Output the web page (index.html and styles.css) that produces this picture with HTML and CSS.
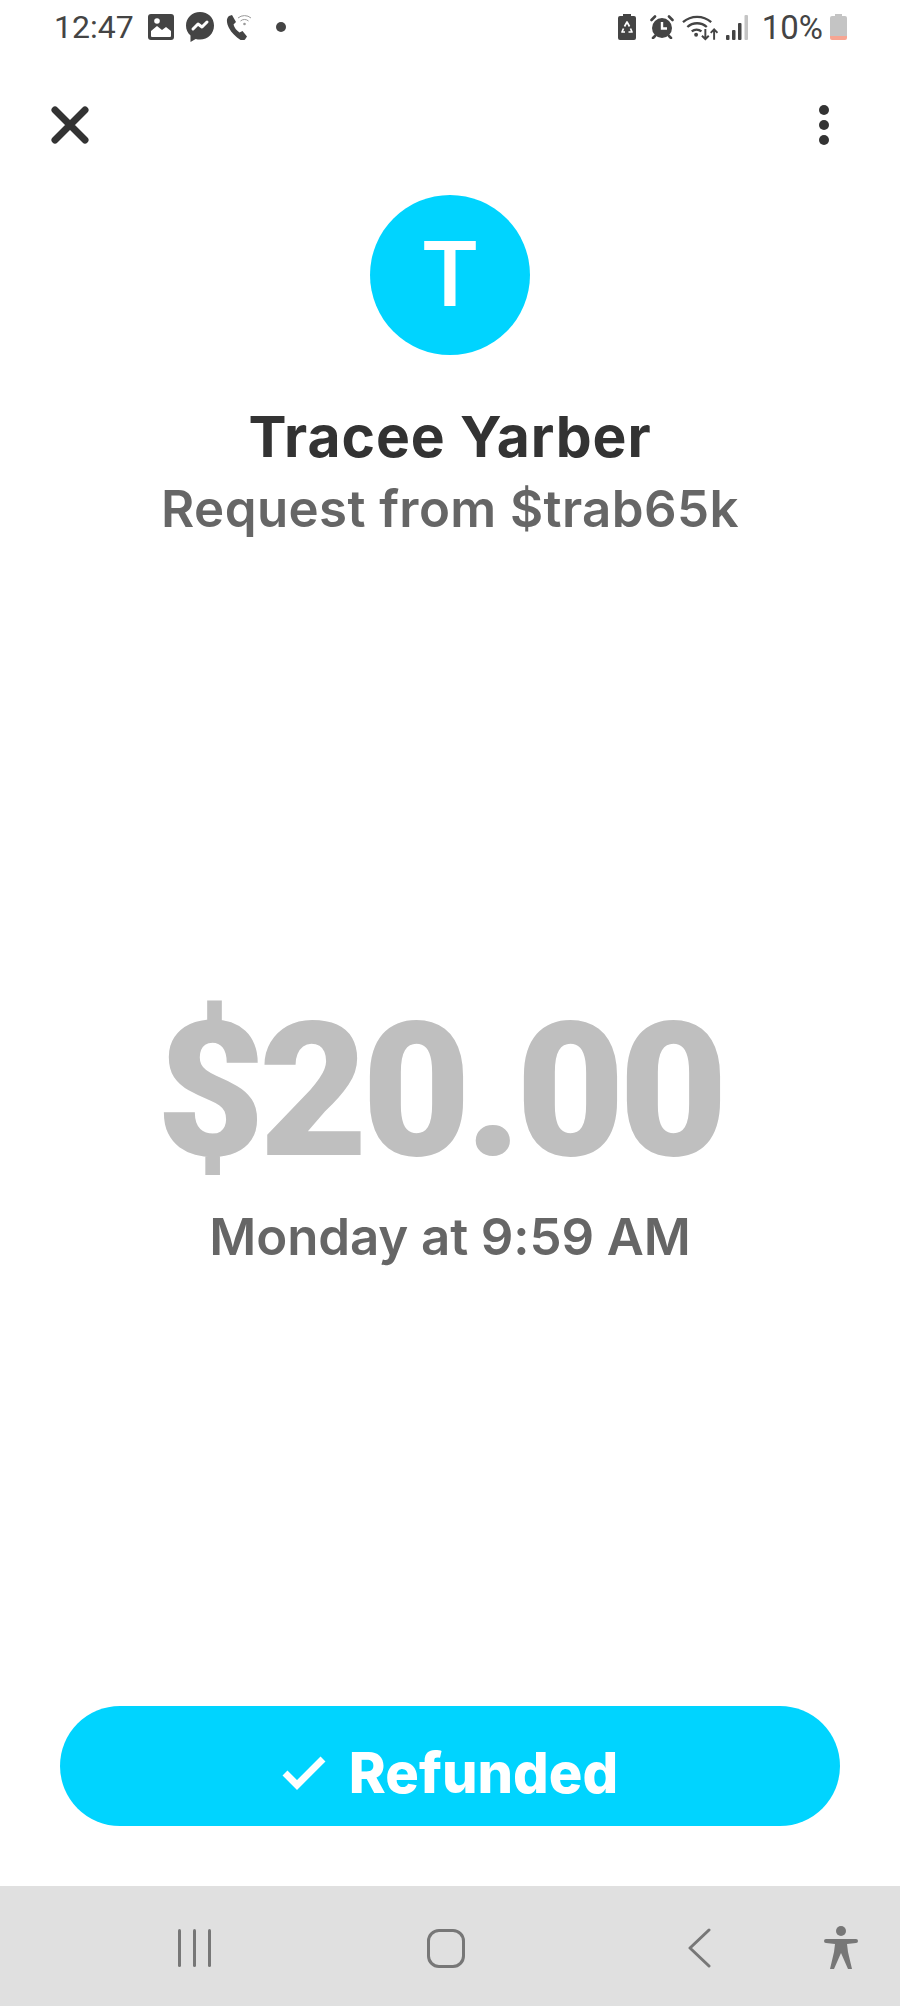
FILE: index.html
```html
<!DOCTYPE html>
<html lang="en">
  <head>
    <meta charset="UTF-8" />
    <meta name="viewport" content="width=device-width, initial-scale=1.0" />
    <title>Tracee Yarber</title>
    <link rel="stylesheet" href="styles.css">
  </head>
  <body>
    <div class="status">
      <span class="clock">12:47</span>
      <div class="status-left">
        <svg width="26" height="26" viewBox="0 0 26 26"><rect width="26" height="26" rx="3" fill="#444"/><path fill="#fff" d="M3 22v-5l6-5 5 4 4-3 5 4v5a1 1 0 0 1-1 1H4a1 1 0 0 1-1-1z"/><circle cx="9" cy="7" r="2.800" fill="#fff"/></svg>
        <svg width="28" height="30" viewBox="0 0 28 30"><path fill="#444" d="M14 0C6 0 0 6 0 13.500c0 4 1.600 7.500 4.500 10V30l5.200-3c1.400.4 2.800.6 4.300.6 8 0 14-6 14-14S22 0 14 0z"/><path fill="none" stroke="#fff" stroke-width="3" stroke-linejoin="round" stroke-linecap="round" d="M7 17l5-5 4 3 5-5"/></svg>
        <svg width="25" height="25" viewBox="0 0 25 25"><path fill="#444" d="M3 1l3-1 4 7-2.500 2.500c.8 3 3 6 6 8l3-1.500 4.500 5.500-2 3c-1 1-2.500 1.300-4 .8C10 22 5.500 18 3 13 1 9-.5 4 3 1z"/><g fill="none" stroke="#999" stroke-width="1"><path d="M12 3a10 10 0 0 1 13 0"/><path d="M14.500 6a6 6 0 0 1 8 0"/></g><circle cx="18.500" cy="9" r="1.300" fill="#999"/></svg>
        <span class="dot"></span>
      </div>
      <div class="status-right">
        <svg class="recycle" width="18" height="26" viewBox="0 0 18 26"><path fill="#444" d="M5 0h8v2h3a2 2 0 0 1 2 2v20a2 2 0 0 1-2 2H2a2 2 0 0 1-2-2V4a2 2 0 0 1 2-2h3z"/><path fill="none" stroke="#fff" stroke-width="1.700" stroke-linejoin="round" d="M6.500 12.500L9 8l2.500 4.500M12.500 14.500l1.500 3.500h-3.500M7 18H4l1.500-3.500"/></svg>
        <svg width="24" height="24" viewBox="0 0 24 24"><circle cx="12" cy="13" r="10" fill="#444"/><path fill="none" stroke="#444" stroke-width="2.600" stroke-linecap="round" d="M1.500 5L5 1.500M22.500 5L19 1.500M5 21l-2 2M19 21l2 2"/><path fill="none" stroke="#fff" stroke-width="2.400" d="M12 7v6.500h5"/></svg>
        <svg width="36" height="28" viewBox="0 0 37 28"><g fill="none" stroke="#444" stroke-width="2.400"><path d="M1 9a22 22 0 0 1 29 0"/><path d="M5.500 14a15 15 0 0 1 20 0"/><path d="M10 18.500a8 8 0 0 1 10 0"/></g><circle cx="14.500" cy="22" r="2" fill="#444"/><path fill="none" stroke="#444" stroke-width="2" d="M24 16v10M20.500 23l3.500 3.500 3.500-3.500M33 27V17M29.500 20l3.500-3.500 3.500 3.500"/></svg>
        <svg width="23" height="25" viewBox="0 0 23 25"><rect x="0" y="20" width="3.500" height="5" rx="1" fill="#444"/><rect x="6" y="15" width="3.500" height="10" rx="1" fill="#444"/><rect x="12" y="8" width="3.500" height="17" rx="1" fill="#444"/><rect x="18.500" y="0" width="3.500" height="25" rx="1" fill="#c4c4c4"/></svg>
        <span class="batt-num">10%</span>
        <svg class="batt" width="17" height="26" viewBox="0 0 17 26"><path fill="#c4c4c4" d="M5 0h7v2h3a2 2 0 0 1 2 2v18H0V4a2 2 0 0 1 2-2h3z"/><path fill="#f7a592" d="M0 22h17v2a2 2 0 0 1-2 2H2a2 2 0 0 1-2-2z"/></svg>
      </div>
    </div>

    <div class="toolbar">
      <svg class="close" width="40" height="40" viewBox="0 0 40 40"><path fill="none" stroke="#333" stroke-width="7" stroke-linecap="round" d="M5 5l30 30M35 5L5 35"/></svg>
      <div class="more"><span></span><span></span><span></span></div>
    </div>

    <div class="profile">
      <div class="avatar">T</div>
      <h1 class="name">Tracee Yarber</h1>
      <p class="sub">Request from $trab65k</p>
    </div>

    <div class="amount-box">
      <div class="amount">$20.00</div>
      <p class="date">Monday at 9:59 AM</p>
    </div>

    <div class="btn">
      <svg width="44" height="34" viewBox="0 0 44 34"><path fill="none" stroke="#fff" stroke-width="7" d="M3 17l12 12L41 3"/></svg>
      <span>Refunded</span>
    </div>

    <div class="nav">
      <div class="nav-recents"><span></span><span></span><span></span></div>
      <div class="nav-home"></div>
      <svg class="nav-back" width="24" height="40" viewBox="0 0 24 40"><path fill="none" stroke="#777" stroke-width="3" stroke-linecap="round" stroke-linejoin="round" d="M22 2L3 20l19 18"/></svg>
      <svg class="nav-access" width="34" height="44" viewBox="0 0 34 44"><circle cx="17" cy="5" r="5" fill="#777"/><path fill="#777" d="M2 13h30a2 2 0 0 1 0 4l-9 1 1 8 4 17h-4l-7-16-7 16H6l4-17 1-8-9-1a2 2 0 0 1 0-4z"/></svg>
    </div>
  </body>
</html>
```

FILE: styles.css
```css
* {
  box-sizing: border-box;
}
html,
body {
  margin: 0;
  padding: 0;
}
body {
  width: 900px;
  height: 2006px;
  background-color: white;
  font-family: "Inter", sans-serif;
  display: flex;
  flex-direction: column;
  overflow: hidden;
}

/* status bar */
.status {
  height: 54px;
  padding: 0 53px 0 54px;
  display: flex;
  align-items: center;
  color: #444;
  font-family: "Roboto", sans-serif;
}
.clock {
  font-size: 32px;
}
.status-left {
  display: flex;
  align-items: center;
  gap: 12px;
  margin-left: 14px;
}
.dot {
  width: 10px;
  height: 10px;
  border-radius: 50%;
  background-color: #444;
  margin-left: 13px;
}
.status-right {
  margin-left: auto;
  display: flex;
  align-items: center;
  gap: 8px;
}
.recycle {
  margin-right: 6px;
}
.batt-num {
  font-size: 33px;
  margin-left: 5px;
}
.batt {
  margin-left: -1px;
}

/* top actions */
.toolbar {
  margin-top: 51px;
  padding: 0 71px 0 50px;
  display: flex;
  justify-content: space-between;
  align-items: flex-start;
}
.more {
  display: flex;
  flex-direction: column;
  gap: 5px;
}
.more span {
  width: 10px;
  height: 10px;
  border-radius: 50%;
  background-color: #333;
}

.profile {
  margin-top: 50px;
  display: flex;
  flex-direction: column;
  align-items: center;
}
.avatar {
  width: 160px;
  height: 160px;
  border-radius: 50%;
  background-color: #00d4ff;
  color: white;
  font-family: "Roboto", sans-serif;
  font-weight: 500;
  font-size: 91px;
  line-height: 160px;
  text-align: center;
}
.name {
  margin: 48px 0 0;
  font-size: 57px;
  font-weight: 700;
  letter-spacing: 0.9px;
  line-height: 68px;
  color: #333;
}
.sub {
  margin: 8px 0 0;
  font-size: 51px;
  font-weight: 600;
  letter-spacing: 0.4px;
  line-height: 60px;
  color: #666;
}

.amount-box {
  margin-top: 442px;
  display: flex;
  flex-direction: column;
  align-items: center;
}
.amount {
  margin: 0 22px 6px 0;
  font-family: "Roboto", sans-serif;
  font-size: 188px;
  font-weight: 900;
  letter-spacing: -6px;
  line-height: 220px;
  color: #bfbfbf;
}
.date {
  margin: 0;
  font-size: 51px;
  font-weight: 600;
  letter-spacing: -0.1px;
  line-height: 60px;
  color: #666;
}

.btn {
  margin: auto 60px 60px;
  height: 120px;
  padding-top: 14px;
  border-radius: 60px;
  background-color: #00d4ff;
  color: white;
  display: flex;
  align-items: center;
  justify-content: center;
  gap: 23px;
  font-size: 56px;
  font-weight: 800;
}

/* android nav */
.nav {
  height: 120px;
  background-color: #e0e0e0;
  display: flex;
  align-items: center;
  padding: 4px 42px 0 178px;
}
.nav-recents {
  display: flex;
  gap: 12px;
}
.nav-recents span {
  width: 3px;
  height: 38px;
  border-radius: 2px;
  background-color: #777;
}
.nav-home {
  width: 38px;
  height: 39px;
  margin-left: 216px;
  border: 3.5px solid #777;
  border-radius: 12px;
}
.nav-back {
  margin-left: 222px;
}
.nav-access {
  margin-left: auto;
}
```
